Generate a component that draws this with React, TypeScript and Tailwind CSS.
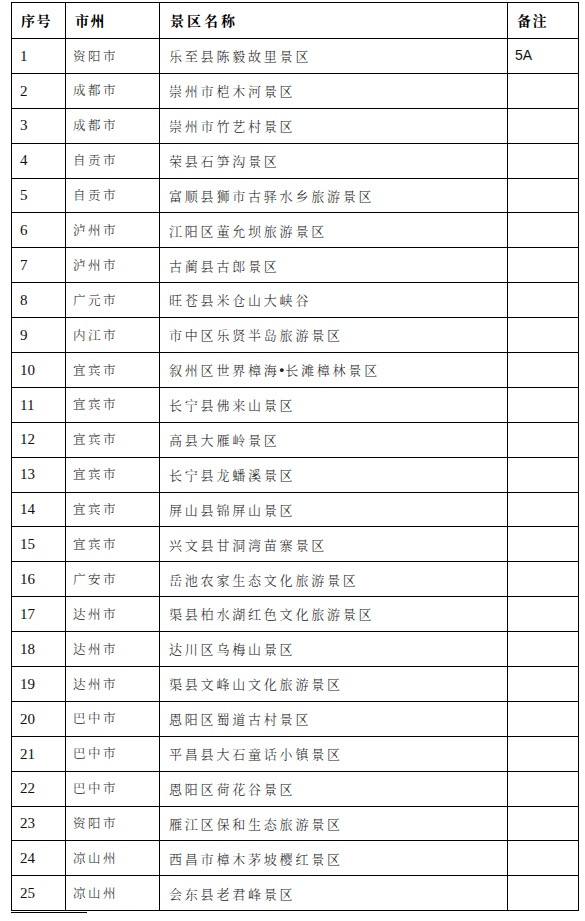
import React from "react";

const rows: [string, string, string, string][] = [
  ["1", "资阳市", "乐至县陈毅故里景区", "5A"],
  ["2", "成都市", "崇州市桤木河景区", ""],
  ["3", "成都市", "崇州市竹艺村景区", ""],
  ["4", "自贡市", "荣县石笋沟景区", ""],
  ["5", "自贡市", "富顺县狮市古驿水乡旅游景区", ""],
  ["6", "泸州市", "江阳区董允坝旅游景区", ""],
  ["7", "泸州市", "古蔺县古郎景区", ""],
  ["8", "广元市", "旺苍县米仓山大峡谷", ""],
  ["9", "内江市", "市中区乐贤半岛旅游景区", ""],
  ["10", "宜宾市", "叙州区世界樟海|长滩樟林景区", ""],
  ["11", "宜宾市", "长宁县佛来山景区", ""],
  ["12", "宜宾市", "高县大雁岭景区", ""],
  ["13", "宜宾市", "长宁县龙蟠溪景区", ""],
  ["14", "宜宾市", "屏山县锦屏山景区", ""],
  ["15", "宜宾市", "兴文县甘洞湾苗寨景区", ""],
  ["16", "广安市", "岳池农家生态文化旅游景区", ""],
  ["17", "达州市", "渠县柏水湖红色文化旅游景区", ""],
  ["18", "达州市", "达川区乌梅山景区", ""],
  ["19", "达州市", "渠县文峰山文化旅游景区", ""],
  ["20", "巴中市", "恩阳区蜀道古村景区", ""],
  ["21", "巴中市", "平昌县大石童话小镇景区", ""],
  ["22", "巴中市", "恩阳区荷花谷景区", ""],
  ["23", "资阳市", "雁江区保和生态旅游景区", ""],
  ["24", "凉山州", "西昌市樟木茅坡樱红景区", ""],
  ["25", "凉山州", "会东县老君峰景区", ""],
];

const cjk = "font-['Noto_Serif_CJK_SC','Noto_Sans_CJK_SC',serif]";

function Name({ text }: { text: string }) {
  if (!text.includes("|")) return <>{text}</>;
  const [a, b] = text.split("|");
  return (
    <>
      {a}
      <span className="font-['Liberation_Sans',sans-serif] font-bold tracking-normal mr-[1px]">•</span>
      {b}
    </>
  );
}

export default function App() {
  return (
    <div className="w-[585px] h-[921px] bg-white pt-[2px] pl-[11px]">
      <div className="grid grid-cols-[54px_94px_348px_71px] w-[568px] border-l border-t border-black">
        <div className={`h-[36px] border-r border-b border-black flex items-center pl-[9px] text-[14px] font-bold tracking-[1.5px] text-black ${cjk}`}>序号</div>
        <div className={`h-[36px] border-r border-b border-black flex items-center pl-[9px] text-[14px] font-bold tracking-[1.5px] text-black ${cjk}`}>市州</div>
        <div className={`h-[36px] border-r border-b border-black flex items-center pl-[10px] text-[14px] font-bold tracking-[3px] text-black ${cjk}`}>景区名称</div>
        <div className={`h-[36px] border-r border-b border-black flex items-center pl-[9px] text-[14px] font-bold tracking-[1.5px] text-black ${cjk}`}>备注</div>
        {rows.map((r) => (
          <React.Fragment key={r[0]}>
            <div className="h-[34.9px] border-r border-b border-black flex items-center pl-[8px] text-[15px] text-[#111] font-['Liberation_Serif',serif]">{r[0]}</div>
            <div className={`h-[34.9px] border-r border-b border-black flex items-center pl-[7px] text-[12.5px] tracking-[2.5px] font-light text-[#222] ${cjk}`}>{r[1]}</div>
            <div className={`h-[34.9px] border-r border-b border-black flex items-center pl-[9px] text-[13px] tracking-[2.8px] font-light text-[#222] ${cjk}`}>
              <Name text={r[2]} />
            </div>
            <div className="h-[34.9px] border-r border-b border-black flex items-center pl-[7px] text-[14px] text-[#111] font-['Liberation_Sans',sans-serif]">{r[3]}</div>
          </React.Fragment>
        ))}
      </div>
      <div className="w-[76px] h-[1px] bg-black mt-[1px]" />
    </div>
  );
}
